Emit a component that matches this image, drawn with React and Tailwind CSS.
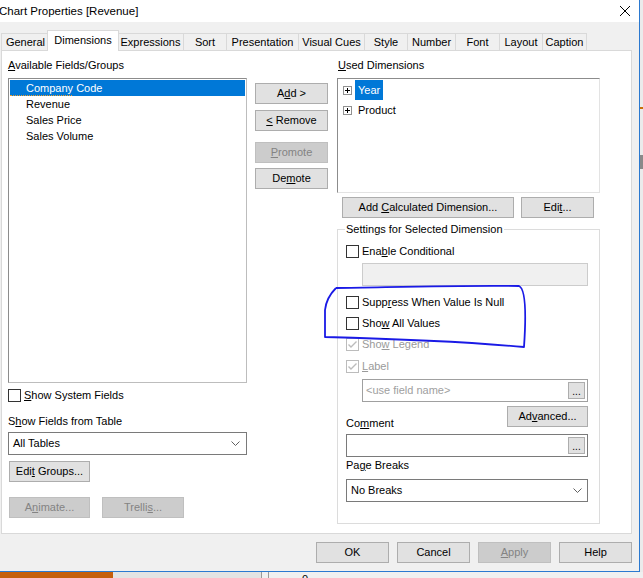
import React from 'react';

const Btn = ({ children, className = '', disabled }) => (
  <div
    className={`h-[21px] flex items-center justify-center border shrink-0 ${
      disabled ? 'bg-[#cccccc] border-[#bfbfbf] text-[#838383]' : 'bg-[#e1e1e1] border-[#adadad] text-black'
    } ${className}`}
  >
    <span className="whitespace-pre">{children}</span>
  </div>
);

const Check = ({ checked, disabled }) => (
  <span
    className={`w-[13px] h-[13px] border shrink-0 flex items-center justify-center ${
      disabled ? 'border-[#bcbcbc] bg-white' : 'border-[#333333] bg-white'
    }`}
  >
    {checked && (
      <svg width="11" height="11" viewBox="0 0 11 11">
        <polyline points="1.5,5.5 4,8 9.5,2.5" fill="none" stroke="#bcbcbc" strokeWidth="1.4" />
      </svg>
    )}
  </span>
);

const CheckRow = ({ children, checked, disabled, className = '' }) => (
  <div className={`flex items-center gap-[3px] h-[13px] ${className}`}>
    <Check checked={checked} disabled={disabled} />
    <span className={`leading-[13px] ${disabled ? 'text-[#9a9a9a]' : 'text-black'}`}>{children}</span>
  </div>
);

const Chevron = () => (
  <svg width="9" height="5" viewBox="0 0 9 5">
    <polyline points="0.5,0.5 4.5,4.5 8.5,0.5" fill="none" stroke="#606060" strokeWidth="1" />
  </svg>
);

const Plus = () => (
  <svg width="9" height="9" viewBox="0 0 9 9" className="shrink-0">
    <rect x="0.5" y="0.5" width="8" height="8" fill="white" stroke="#919191" />
    <line x1="2" y1="4.5" x2="7" y2="4.5" stroke="#000" />
    <line x1="4.5" y1="2" x2="4.5" y2="7" stroke="#000" />
  </svg>
);

const Dots = () => (
  <div className="w-[17px] h-[17px] bg-[#e1e1e1] border border-[#adadad] flex items-end justify-center leading-[12px] text-[10px] shrink-0">
    ...
  </div>
);

const tabs = [
  { name: 'General', w: 'w-[48px]' },
  { name: 'Dimensions', w: 'w-[72px]', active: true },
  { name: 'Expressions', w: 'w-[66px]' },
  { name: 'Sort', w: 'w-[43px]' },
  { name: 'Presentation', w: 'w-[72px]' },
  { name: 'Visual Cues', w: 'w-[66px]' },
  { name: 'Style', w: 'w-[43px]' },
  { name: 'Number', w: 'w-[48px]' },
  { name: 'Font', w: 'w-[44px]' },
  { name: 'Layout', w: 'w-[43px]' },
  { name: 'Caption', w: 'w-[45px]' },
];

const fields = ['Company Code', 'Revenue', 'Sales Price', 'Sales Volume'];

export default function App() {
  return (
    <div className="relative w-[643px] h-[578px] overflow-hidden bg-[#f0f0f0] font-['Liberation_Sans',Arial,sans-serif] text-[11px] text-black">
      <div className="flex h-[572px]">
        {/* dialog */}
        <div className="w-[640px] h-[572px] bg-[#f0f0f0] border-r border-b border-[#2b79d0] flex flex-col">
          <div className="h-[22px] bg-white flex items-center justify-between pr-[9px] shrink-0">
            <span className="-ml-[1px] text-[11.5px] leading-[14px]">Chart Properties [Revenue]</span>
            <svg width="10" height="10" viewBox="0 0 10 10">
              <line x1="0" y1="0" x2="10" y2="10" stroke="#000" strokeWidth="1" />
              <line x1="10" y1="0" x2="0" y2="10" stroke="#000" strokeWidth="1" />
            </svg>
          </div>

          {/* tabs */}
          <div className="mt-[8px] h-[21px] flex items-end pl-[1px] relative z-10 shrink-0">
            {tabs.map((t, i) =>
              t.active ? (
                <div
                  key={t.name}
                  className={`${t.w} -mx-[2px] h-[21px] bg-white border-t border-l border-r border-[#d9d9d9] flex justify-center pt-[2px] leading-[15px] relative z-10`}
                >
                  {t.name}
                </div>
              ) : (
                <div
                  key={t.name}
                  className={`${t.w} h-[17px] mb-[1px] border-t border-l border-[#d9d9d9] flex items-center justify-center leading-[15px] ${
                    i === tabs.length - 1 ? 'border-r' : ''
                  }`}
                >
                  {t.name}
                </div>
              )
            )}
          </div>

          {/* panel */}
          <div className="-mt-[1px] ml-[1px] w-[631px] h-[484px] bg-white border border-[#d9d9d9] flex pl-[6px] shrink-0">
            {/* left column */}
            <div className="w-[239px] flex flex-col">
              <div className="mt-[7px] h-[15px] leading-[15px]">
                <u>A</u>vailable Fields/Groups
              </div>
              <div className="mt-[5px] h-[305px] border border-t-[#8c8c8c] border-l-[#8c8c8c] border-r-[#bdbdbd] border-b-[#bdbdbd] pt-[1px] px-[1px]">
                {fields.map((f, i) => (
                  <div
                    key={f}
                    className={`h-[16px] leading-[16px] pl-[16px] relative ${i === 0 ? 'bg-[#0078d7] text-white' : ''}`}
                  >
                    {f}
                    {i === 0 && (
                      <div className="absolute left-0 bottom-0 w-[62px] border-b border-dotted border-[#f0a030]" />
                    )}
                  </div>
                ))}
              </div>
              <CheckRow className="mt-[6px]">
                <u>S</u>how System Fields
              </CheckRow>
              <div className="mt-[12px] h-[15px] leading-[15px]">
                S<u>h</u>ow Fields from Table
              </div>
              <div className="mt-[3px] h-[23px] border border-[#7a7a7a] bg-white flex items-center justify-between pl-[4px] pr-[6px]">
                <span>All Tables</span>
                <Chevron />
              </div>
              <Btn className="mt-[6px] ml-[1px] w-[81px]">
                Edi<u>t</u> Groups...
              </Btn>
              <div className="mt-[15px] ml-[1px] flex gap-[12px]">
                <Btn disabled className="w-[81px]">
                  A<u>n</u>imate...
                </Btn>
                <Btn disabled className="w-[82px]">
                  Trelli<u>s</u>...
                </Btn>
              </div>
            </div>

            {/* middle buttons */}
            <div className="ml-[8px] w-[73px] flex flex-col pt-[32px]">
              <Btn className="w-[73px]">
                A<u>d</u>d &gt;
              </Btn>
              <Btn className="mt-[6px] w-[73px]">
                <u>&lt;</u> Remove
              </Btn>
              <Btn disabled className="mt-[11px] w-[73px]">
                <u>P</u>romote
              </Btn>
              <Btn className="mt-[5px] w-[73px]">
                De<u>m</u>ote
              </Btn>
            </div>

            {/* right column */}
            <div className="ml-[9px] w-[263px] flex flex-col">
              <div className="mt-[7px] pl-[1px] h-[15px] leading-[15px]">
                <u>U</u>sed Dimensions
              </div>
              <div className="mt-[5px] h-[115px] border border-t-[#8c8c8c] border-l-[#8c8c8c] border-r-[#e3e3e3] border-b-[#e3e3e3] pt-[1px] pl-[5px]">
                <div className="h-[20px] flex items-center gap-[3px]">
                  <Plus />
                  <span className="h-[20px] leading-[20px] px-[3px] bg-[#0078d7] text-white">Year</span>
                </div>
                <div className="h-[20px] flex items-center gap-[3px]">
                  <Plus />
                  <span className="h-[20px] leading-[20px] px-[3px]">Product</span>
                </div>
              </div>
              <div className="mt-[4px] ml-[5px] flex gap-[7px]">
                <Btn className="w-[172px]">
                  Add <u>C</u>alculated Dimension...
                </Btn>
                <Btn className="w-[73px]">
                  Edi<u>t</u>...
                </Btn>
              </div>

              {/* group box */}
              <div className="mt-[11px] h-[295px] border border-[#dcdcdc] flex flex-col pl-[8px] pr-[11px]">
                <div className="-mt-[8px] -ml-[1px] w-fit px-[1px] bg-white h-[15px] leading-[15px]">
                  Settings for Selected Dimension
                </div>
                <CheckRow className="mt-[8px]">
                  Ena<u>b</u>le Conditional
                </CheckRow>
                <div className="mt-[5px] ml-[16px] h-[23px] bg-[#f0f0f0] border border-[#cccccc]" />
                <CheckRow className="mt-[10px]">
                  Supp<u>r</u>ess When Value Is Null
                </CheckRow>
                <CheckRow className="mt-[8px]">
                  Sho<u>w</u> All Values
                </CheckRow>
                <CheckRow className="mt-[8px]" checked disabled>
                  Sho<u>w</u> Legend
                </CheckRow>
                <CheckRow className="mt-[9px]" checked disabled>
                  <u>L</u>abel
                </CheckRow>
                <div className="mt-[6px] ml-[16px] h-[23px] bg-white border border-[#a0a0a0] flex items-center justify-between pl-[3px] pr-[2px]">
                  <span className="text-[#a0a0a0]">&lt;use field name&gt;</span>
                  <Dots />
                </div>
                <div className="mt-[4px] h-[25px] flex justify-between items-start">
                  <div className="mt-[10px] h-[15px] leading-[15px]">
                    Co<u>m</u>ment
                  </div>
                  <Btn className="w-[81px]">
                    Ad<u>v</u>anced...
                  </Btn>
                </div>
                <div className="mt-[3px] h-[23px] bg-white border border-[#7a7a7a] flex items-center justify-end pr-[2px]">
                  <Dots />
                </div>
                <div className="mt-[1px] h-[15px] leading-[15px]">
                  Pa<u>g</u>e Breaks
                </div>
                <div className="mt-[6px] h-[23px] bg-white border border-[#7a7a7a] flex items-center justify-between pl-[4px] pr-[5px]">
                  <span>No Breaks</span>
                  <Chevron />
                </div>
              </div>
            </div>
          </div>

          {/* footer */}
          <div className="mt-[8px] flex justify-end gap-[8px] pr-[7px]">
            <Btn className="w-[73px]">OK</Btn>
            <Btn className="w-[73px]">Cancel</Btn>
            <Btn disabled className="w-[73px]">
              <u>A</u>pply
            </Btn>
            <Btn className="w-[73px]">Help</Btn>
          </div>
        </div>

        {/* background strip on the right */}
        <div className="w-[3px] h-[572px] bg-[#ebebeb] flex flex-col">
          <div className="h-[107px]" />
          <div className="h-[2px] bg-[#c8700a]" />
          <div className="h-[46px]" />
          <div className="h-[14px] bg-[#8a8a8a]" />
        </div>
      </div>

      {/* background strip at the bottom */}
      <div className="h-[6px] flex">
        <div className="w-[113px] bg-[#c55f0d]" />
        <div className="w-[148px] bg-[#e3e3e3]" />
        <div className="w-[8px] border-l border-r border-[#9a9a9a] bg-[#f0f0f0]" />
        <div className="flex-1 bg-[#f0f0f0] pl-[33px] leading-[14px] text-[11px] overflow-hidden">0</div>
      </div>

      {/* hand-drawn annotation */}
      <svg className="absolute inset-0 pointer-events-none" width="643" height="578" viewBox="0 0 643 578">
        <path
          d="M336 288 C 400 287, 470 285, 519 286 C 526 289, 526 318, 524 347 C 480 343, 400 339, 325 337 L 325 310 C 326 301, 330 294, 336 288"
          fill="none"
          stroke="#1a1ae6"
          strokeWidth="1.8"
          strokeLinejoin="round"
        />
      </svg>
    </div>
  );
}
